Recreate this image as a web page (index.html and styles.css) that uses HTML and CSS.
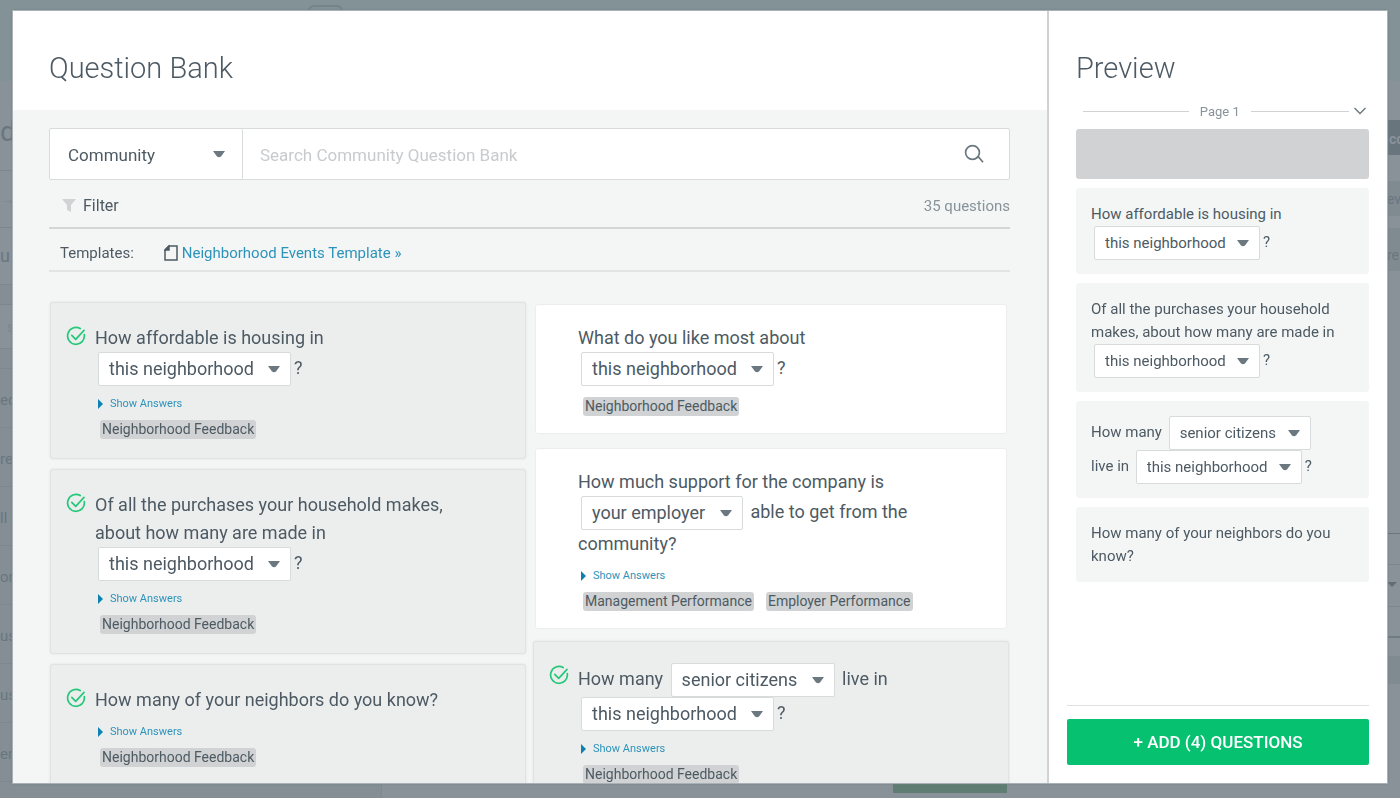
FILE: index.html
```html
<!DOCTYPE html>
<html lang="en">
<head>
    <meta charset="UTF-8">
    <meta name="viewport" content="width=device-width, initial-scale=1.0">
    <title>Question Bank</title>
    <link rel="stylesheet" href="styles.css">
</head>
<body>

<!-- icons used more than once -->
<svg class="sprite" aria-hidden="true">
    <symbol id="check" viewBox="0 0 20 20">
        <path d="M14.2 2.6A8.4 8.4 0 1 0 18.3 8.6" fill="none" stroke="currentColor" stroke-width="1.7" stroke-linecap="round"/>
        <path d="M5.8 9.3l3.9 4L18 4.4" fill="none" stroke="currentColor" stroke-width="1.7" stroke-linecap="round" stroke-linejoin="round"/>
    </symbol>
</svg>

<!-- survey editor, dimmed behind the dialog -->
<div class="backdrop" aria-hidden="true">
    <div class="backdrop-top"><span class="backdrop-tab"></span></div>
    <div class="backdrop-body">
        <div class="backdrop-left">
            <div class="row-title">d</div>
            <div class="row-arrow">→</div>
            <div class="row-menu">u</div>
            <div class="row-gap"></div>
            <div class="row-search">s</div>
            <div class="row-gap"></div>
            <div class="row-item">ed</div>
            <div class="row-item">re</div>
            <div class="row-item">ll</div>
            <div class="row-item">or</div>
            <div class="row-item">us</div>
            <div class="row-item">us</div>
            <div class="row-item">er</div>
        </div>
        <div class="backdrop-main"><span class="backdrop-done"></span></div>
        <div class="backdrop-right">
            <div class="side-button">co</div>
            <div class="side-preview">ev</div>
            <div class="side-require">re</div>
            <div class="side-space"></div>
            <div class="side-field"></div>
            <div class="side-select"><span class="caret"></span></div>
            <div class="side-line"></div>
            <div class="side-footer"></div>
        </div>
    </div>
</div>

<div class="dialog" role="dialog" aria-label="Question Bank">
    <main class="bank">
        <header class="bank-header">
            <h1>Question Bank</h1>
        </header>
        <div class="bank-body">
            <div class="search-bar">
                <select class="category" aria-label="Category">
                    <option>Community</option>
                </select>
                <input class="search-input" type="text" placeholder="Search Community Question Bank" aria-label="Search Community Question Bank">
                <button class="search-button" aria-label="Search">
                    <svg width="20" height="20" viewBox="0 0 20 20" fill="none" stroke="currentColor" stroke-width="1.7">
                        <circle cx="8.5" cy="8.5" r="6.9"/>
                        <path d="M12.6 13.8l1.6-1.3 4.800 5.800"/>
                    </svg>
                </button>
            </div>

            <div class="filter-bar">
                <button class="filter-button">
                    <svg width="14" height="14" viewBox="0 0 14 14" fill="currentColor"><path d="M0 0h14L9 6v7L5 11V6z"/></svg>
                    Filter
                </button>
                <span class="count">35 questions</span>
            </div>

            <div class="template-bar">
                <span>Templates:</span>
                <a href="#">
                    <svg width="14" height="16" viewBox="0 0 14 16" fill="none" stroke="currentColor" stroke-width="1.5"><path d="M5 1h8v14H1V5z"/><path d="M5 1v4H1z" fill="currentColor"/></svg>
                    Neighborhood Events Template »
                </a>
            </div>

            <div class="columns">
                <div class="column">
                    <section class="card selected">
                        <svg class="check"><use href="#check"/></svg>
                        <p class="question">How affordable is housing in<br>
                            <select class="variable" aria-label="Place"><option>this neighborhood</option></select>?</p>
                        <button class="answers">Show Answers</button>
                        <div class="tags"><span class="tag">Neighborhood Feedback</span></div>
                    </section>
                    <section class="card selected">
                        <svg class="check"><use href="#check"/></svg>
                        <p class="question">Of all the purchases your household makes,<br>about how many are made in<br>
                            <select class="variable" aria-label="Place"><option>this neighborhood</option></select>?</p>
                        <button class="answers">Show Answers</button>
                        <div class="tags"><span class="tag">Neighborhood Feedback</span></div>
                    </section>
                    <section class="card selected">
                        <svg class="check"><use href="#check"/></svg>
                        <p class="question">How many of your neighbors do you know?</p>
                        <button class="answers">Show Answers</button>
                        <div class="tags"><span class="tag">Neighborhood Feedback</span></div>
                    </section>
                </div>
                <div class="column">
                    <section class="card">
                        <p class="question">What do you like most about<br>
                            <select class="variable" aria-label="Place"><option>this neighborhood</option></select>?</p>
                        <div class="tags"><span class="tag">Neighborhood Feedback</span></div>
                    </section>
                    <section class="card">
                        <p class="question">How much support for the company is<br>
                            <select class="variable" aria-label="Organization"><option>your employer</option></select> able to get from the<br>community?</p>
                        <button class="answers">Show Answers</button>
                        <div class="tags"><span class="tag">Management Performance</span><span class="tag">Employer Performance</span></div>
                    </section>
                    <section class="card selected">
                        <svg class="check"><use href="#check"/></svg>
                        <p class="question">How many
                            <select class="variable" aria-label="Group"><option>senior citizens</option></select> live in<br>
                            <select class="variable" aria-label="Place"><option>this neighborhood</option></select>?</p>
                        <button class="answers">Show Answers</button>
                        <div class="tags"><span class="tag">Neighborhood Feedback</span></div>
                    </section>
                </div>
            </div>
        </div>
    </main>

    <aside class="preview">
        <h2>Preview</h2>
        <div class="page-row">
            <span class="page-name">Page 1</span>
            <button class="collapse" aria-label="Collapse page">
                <svg width="12" height="8" viewBox="0 0 12 8" fill="none" stroke="currentColor" stroke-width="1.4"><path d="M.5 1L6 6.5 11.5 1"/></svg>
            </button>
        </div>
        <div class="preview-list">
            <div class="page-title"></div>
            <div class="preview-card">How affordable is housing in<br>
                <select class="variable" aria-label="Place"><option>this neighborhood</option></select>?</div>
            <div class="preview-card">Of all the purchases your household<br>makes, about how many are made in<br>
                <select class="variable" aria-label="Place"><option>this neighborhood</option></select>?</div>
            <div class="preview-card">How many
                <select class="variable" aria-label="Group"><option>senior citizens</option></select><br>live in
                <select class="variable" aria-label="Place"><option>this neighborhood</option></select>?</div>
            <div class="preview-card">How many of your neighbors do you know?</div>
        </div>
        <footer class="preview-footer">
            <button class="add-button">+ ADD (4) QUESTIONS</button>
        </footer>
    </aside>
</div>

</body>
</html>
```

FILE: styles.css
```css
* {
    box-sizing: border-box;
}

body {
    margin: 0;
    height: 100vh;
    overflow: hidden;
    background-color: #fff;
    color: #4d5a63;
    font-family: Roboto, "Liberation Sans", sans-serif;
    font-size: 15px;
}

button, input, select {
    font: inherit;
    color: inherit;
}

button {
    background: none;
    border: none;
    padding: 0;
    cursor: pointer;
}

.sprite {
    display: none;
}

/* dimmed page */
.backdrop {
    height: calc(100vh - 2px);
    display: flex;
    flex-direction: column;
    overflow: hidden;
    background-color: #8a9299;
    color: #69767f;
}

.backdrop-top {
    height: 81px;
    flex: none;
    padding: 5px 308px;
    background-color: #839296;
}

.backdrop-tab {
    display: block;
    width: 35px;
    height: 20px;
    border: 2px solid #75838a;
    border-radius: 6px;
}

.backdrop-body {
    flex: 1;
    display: flex;
}

.backdrop-left {
    width: 382px;
    border-right: 1px solid #7f8990;
    background-color: #848e94;
}

.backdrop-left div {
    border-bottom: 1px solid #7c878e;
    white-space: nowrap;
}

.backdrop-left .row-title {
    height: 90px;
    line-height: 102px;
    font-size: 28px;
    background-color: #8a9299;
}

.backdrop-left .row-arrow, .backdrop-left .row-menu {
    height: 57px;
    line-height: 56px;
    background-color: #8a9299;
}

.backdrop-left .row-arrow {
    color: #7c878e;
}

.row-menu {
    font-size: 18px;
}

.row-gap {
    height: 20px;
}

.backdrop-left .row-search {
    height: 44px;
    line-height: 44px;
    padding-left: 7px;
    background-color: #8a9299;
    color: #7c878e;
}

.row-item {
    height: 59px;
    line-height: 62px;
}

.backdrop-main {
    flex: 1;
    display: flex;
    align-items: flex-end;
    justify-content: flex-end;
    padding-bottom: 5px;
}

.backdrop-done {
    width: 114px;
    height: 36px;
    background-color: #5f7d72;
}

.backdrop-right {
    width: 393px;
    padding-top: 39px;
    display: flex;
    flex-direction: column;
    align-items: flex-end;
}

.backdrop-right div {
    width: 13px;
    flex: none;
}

.side-button {
    height: 35px;
    line-height: 38px;
    padding-left: 2px;
    font-size: 14px;
    font-weight: bold;
    background-color: #68757c;
    color: #8a9299;
}

.side-preview {
    height: 35px;
    margin-top: 26px;
    line-height: 36px;
    font-size: 14px;
    background-color: #808a91;
}

.side-require {
    height: 43px;
    margin-top: 12px;
    line-height: 54px;
    font-size: 14px;
    background-color: #808a91;
}

.side-space {
    height: 263px;
    border-bottom: 1px solid #69767f;
}

.side-field {
    height: 31px;
    border-bottom: 1px solid #7c878e;
}

.side-select {
    height: 42px;
    line-height: 34px;
    border-bottom: 1px solid #7c878e;
}

.caret {
    display: inline-block;
    border: 5px solid transparent;
    border-top-color: #5f6d76;
    border-bottom: 0;
}

.side-line {
    height: 31px;
    border-bottom: 2px solid #707c84;
}

.backdrop-right .side-footer {
    height: 28px;
    margin-top: 18px;
    background-color: #808a91;
}

/* dialog */
.dialog {
    position: fixed;
    top: 10px;
    right: 12px;
    bottom: 16px;
    left: 12px;
    display: flex;
    border: 1px solid #a9b0b6;
    background-color: #fff;
    box-shadow: 0 0 2px #75828a;
}

.bank {
    flex: 1;
    min-width: 0;
    display: flex;
    flex-direction: column;
    overflow: hidden;
}

.bank-header {
    height: 99px;
    flex: none;
    padding: 38px 36px 0;
}

h1, h2 {
    margin: 0;
    font-size: 29px;
    font-weight: 300;
    line-height: 38px;
}

.bank-body {
    flex: 1;
    min-height: 0;
    padding: 18px 37px 0 36px;
    background-color: #f4f6f6;
}

.search-bar {
    display: flex;
    height: 52px;
    border: 1px solid #d8dbdb;
    border-radius: 2px;
    background-color: #fff;
    font-size: 17px;
}

select {
    appearance: none;
    margin: 0;
    border: none;
    border-radius: 2px;
    background: #fff url("data:image/svg+xml,%3Csvg xmlns='http://www.w3.org/2000/svg' width='12' height='7'%3E%3Cpath d='M0 0h12L8 5.500Q6 7 4 5.500z' fill='%236b787f'/%3E%3C/svg%3E") no-repeat;
}

.category {
    width: 193px;
    padding: 1px 18px 0;
    border-right: 1px solid #d8dbdb;
    background-position: right 17px center;
}

.search-input {
    flex: 1;
    min-width: 0;
    padding: 1px 17px 0;
    border: none;
    outline: none;
}

.search-input::placeholder {
    color: #c8cbcd;
}

.search-button {
    display: flex;
    align-items: center;
    justify-content: center;
    width: 70px;
    color: #6b787f;
}

.filter-bar {
    display: flex;
    justify-content: space-between;
    align-items: center;
    height: 49px;
    padding: 4px 0 0 13px;
    border-bottom: 2px solid #d3d6d6;
}

.filter-button {
    display: flex;
    align-items: center;
    gap: 7px;
    font-size: 16px;
}

.filter-button svg {
    color: #d0d2d3;
}

.count {
    color: #87939a;
}

.template-bar {
    display: flex;
    align-items: center;
    gap: 30px;
    height: 43px;
    padding: 7px 11px 0;
    border-bottom: 2px solid #e3e5e5;
}

a {
    color: #2d93ba;
    text-decoration: none;
}

.template-bar a {
    display: flex;
    align-items: center;
    gap: 4px;
}

.template-bar svg {
    color: #4d5a63;
}

.columns {
    display: grid;
    grid-template-columns: 1fr 1fr;
    gap: 7px;
    padding: 30px 1px 0;
}

.column {
    display: flex;
    flex-direction: column;
    gap: 10px;
}

.card {
    position: relative;
    margin: 2px;
    padding: 19px 14px 17px 42px;
    border: 1px solid #eceeee;
    border-radius: 3px;
    background-color: #fff;
}

.card.selected {
    margin: 0;
    padding: 21px 16px 19px 44px;
    border-color: #e0e3e3;
    background-color: #eceeee;
    box-shadow: 0 0 2px #d8dbdb;
}

.check {
    position: absolute;
    top: 23px;
    left: 15px;
    width: 20px;
    height: 20px;
    color: #24c878;
}

.question {
    margin: 0 0 6px;
    font-size: 18px;
    line-height: 28px;
}

.variable {
    height: 34px;
    margin: 0 3px;
    padding: 0 36px 0 10px;
    border: 1px solid #d8dbdb;
    background-position: right 10px center;
    vertical-align: middle;
}

.answers {
    display: flex;
    align-items: center;
    gap: 7px;
    height: 23px;
    margin-left: 3px;
    color: #2d93ba;
    font-size: 11px;
}

.answers::before {
    content: "";
    border: 5px solid transparent;
    border-left-color: #0d82b0;
    border-right: 0;
}

.tags {
    display: flex;
    gap: 12px;
    padding: 5px 0 0 5px;
}

.tag {
    padding: 0 2px;
    border-radius: 3px;
    background-color: #d0d2d3;
    font-size: 14px;
    line-height: 19px;
}

/* preview panel */
.preview {
    width: 340px;
    flex: none;
    display: flex;
    flex-direction: column;
    padding: 38px 18px 18px;
    border-left: 2px solid #d0d2d3;
}

h2 {
    padding-left: 9px;
}

.page-row {
    display: flex;
    align-items: center;
    gap: 5px;
    height: 30px;
    margin: 9px 3px 3px 16px;
    color: #87939a;
    font-size: 13px;
}

.page-name {
    flex: 1;
    display: flex;
    align-items: center;
    gap: 11px;
}

.page-name::before, .page-name::after {
    content: "";
    flex: 13;
    border-top: 1px solid #d0d2d3;
}

.page-name::before {
    flex: 14;
}

.collapse {
    display: flex;
    color: #6b787f;
}

.preview-list {
    flex: 1;
    display: flex;
    flex-direction: column;
    gap: 9px;
    padding-left: 9px;
}

.page-title {
    height: 50px;
    border-radius: 3px;
    background-color: #d0d2d3;
}

.preview-card {
    padding: 15px 15px 14px;
    border-radius: 3px;
    background-color: #f4f6f6;
    line-height: 23px;
}

.preview-card .variable {
    padding: 0 33px 0 10px;
}

.preview-footer {
    padding-top: 13px;
    border-top: 1px solid #dfe2e2;
}

.add-button {
    width: 100%;
    height: 46px;
    border-radius: 2px;
    background-color: #05c170;
    color: #fff;
    font-size: 17px;
    font-weight: 500;
}
```
